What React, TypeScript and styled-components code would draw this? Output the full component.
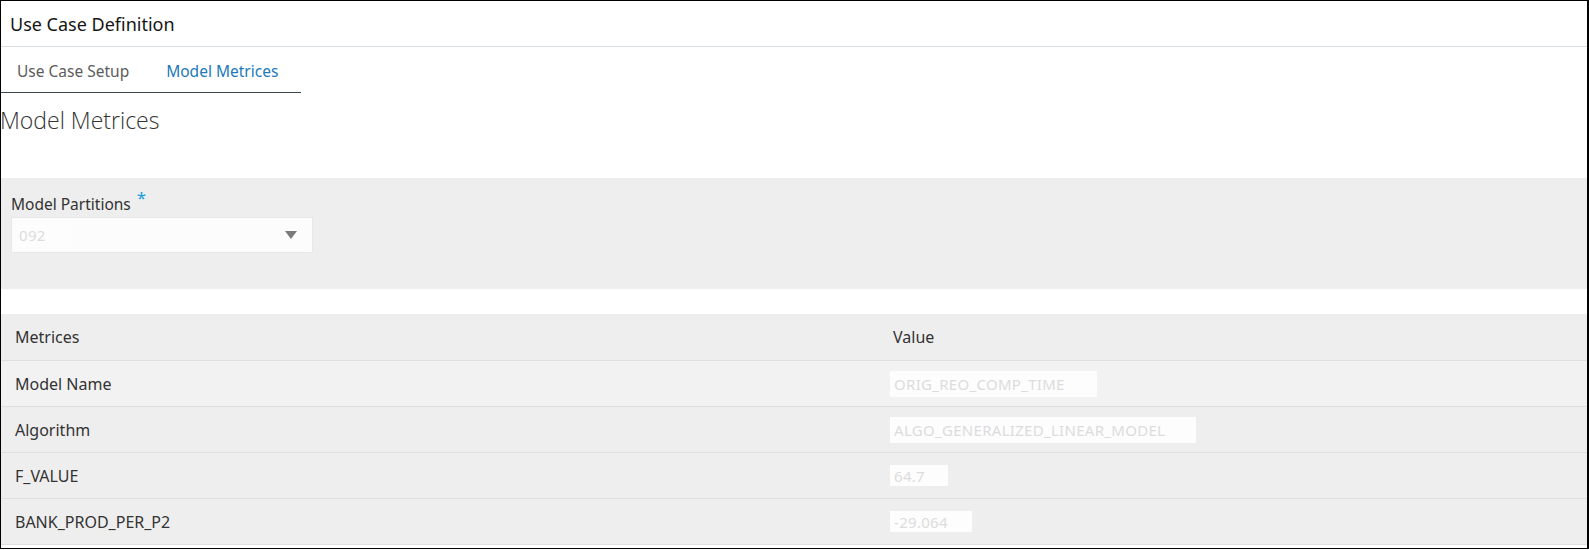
import React from "react";
import styled, { createGlobalStyle } from "styled-components";

const GlobalStyle = createGlobalStyle`
  html, body {
    margin: 0;
    padding: 0;
    background: #ffffff;
  }
  body {
    font-family: "Noto Sans", "Open Sans", sans-serif;
    color: #161513;
  }
`;

const Frame = styled.div`
  box-sizing: border-box;
  width: 1589px;
  height: 549px;
  border: 1px solid #000;
  border-right-width: 2px;
  overflow: hidden;
  background: #fff;
`;

const Header = styled.div`
  height: 45px;
  display: flex;
  align-items: center;
  padding-left: 9px;
  font-size: 18px;
  color: #161513;
  border-bottom: 1px solid #d9dee3;
`;

const TabList = styled.div`
  display: flex;
  width: 300px;
  height: 45px;
  border-bottom: 1px solid #3d4650;
`;

const Tab = styled.div<{ $active?: boolean }>`
  display: flex;
  align-items: center;
  padding: 2px 18px 0 16px;
  font-size: 15.5px;
  color: ${(p) => (p.$active ? "#227ab8" : "#5c5c5c")};
  & + & {
    padding-left: 19px;
  }
`;

const Title = styled.h2`
  margin: 0;
  height: 85px;
  padding-top: 11px;
  box-sizing: border-box;
  font-family: "Open Sans", sans-serif;
  font-weight: 300;
  font-size: 23px;
  color: #333;
  margin-left: -1px;
`;

const FilterBand = styled.div`
  background: #eeeeee;
  height: 111px;
  padding: 12px 10px 0;
  box-sizing: border-box;
`;

const Label = styled.div`
  font-size: 15.5px;
  color: #333;
  height: 27px;
  display: flex;
  align-items: center;
`;

const Required = styled.span`
  color: #1a9be0;
  font-size: 17px;
  margin-left: 6px;
  position: relative;
  top: -6px;
`;

const Select = styled.div`
  width: 302px;
  height: 36px;
  box-sizing: border-box;
  background: #fcfcfc;
  border: 1px solid #e8e8e8;
  border-radius: 2px;
  display: flex;
  align-items: center;
  justify-content: space-between;
  padding: 0 15px 0 3px;
`;

const Arrow = styled.div`
  width: 0;
  height: 0;
  border-left: 6px solid transparent;
  border-right: 6px solid transparent;
  border-top: 8px solid #7a7a7a;
`;

const Masked = styled.span<{ $w: number; $h?: number }>`
  display: inline-flex;
  align-items: center;
  width: ${(p) => p.$w}px;
  height: ${(p) => p.$h ?? 26}px;
  background: #fdfdfd;
  color: #dcdcdc;
  font-size: 15px;
  letter-spacing: 0.3px;
  padding-left: 4px;
  box-sizing: border-box;
  white-space: nowrap;
  overflow: hidden;
`;

const Table = styled.div`
  margin-top: 25px;
  display: grid;
  grid-template-columns: 865px 1fr;
`;

const Cell = styled.div<{ $head?: boolean; $light?: boolean }>`
  height: ${(p) => (p.$head ? 47 : 46)}px;
  box-sizing: border-box;
  display: flex;
  align-items: center;
  padding-left: 14px;
  font-size: 16px;
  color: #333;
  background: ${(p) => (p.$light ? "#f2f2f2" : "#eeeeee")};
  border-bottom: 1px solid #dfdfdf;
`;

const ValueCell = styled(Cell)`
  padding-left: ${(p) => (p.$head ? 27 : 24)}px;
`;

const rows = [
  { name: "Model Name", value: "ORIG_REO_COMP_TIME", w: 207 },
  { name: "Algorithm", value: "ALGO_GENERALIZED_LINEAR_MODEL", w: 306 },
  { name: "F_VALUE", value: "64.7", w: 58, h: 21 },
  { name: "BANK_PROD_PER_P2", value: "-29.064", w: 82, h: 21 },
];

export default function App() {
  return (
    <>
      <GlobalStyle />
      <Frame>
        <Header>Use Case Definition</Header>
        <TabList>
          <Tab>Use Case Setup</Tab>
          <Tab $active>Model Metrices</Tab>
        </TabList>
        <Title>Model Metrices</Title>
        <FilterBand>
          <Label>
            Model Partitions<Required>*</Required>
          </Label>
          <Select>
            <Masked $w={50} $h={24}>092</Masked>
            <Arrow />
          </Select>
        </FilterBand>
        <Table>
          <Cell $head>Metrices</Cell>
          <ValueCell $head>Value</ValueCell>
          {rows.map((r, i) => (
            <React.Fragment key={r.name}>
              <Cell $light={i === 0}>{r.name}</Cell>
              <ValueCell $light={i === 0}>
                <Masked $w={r.w} $h={r.h}>{r.value}</Masked>
              </ValueCell>
            </React.Fragment>
          ))}
        </Table>
      </Frame>
    </>
  );
}
